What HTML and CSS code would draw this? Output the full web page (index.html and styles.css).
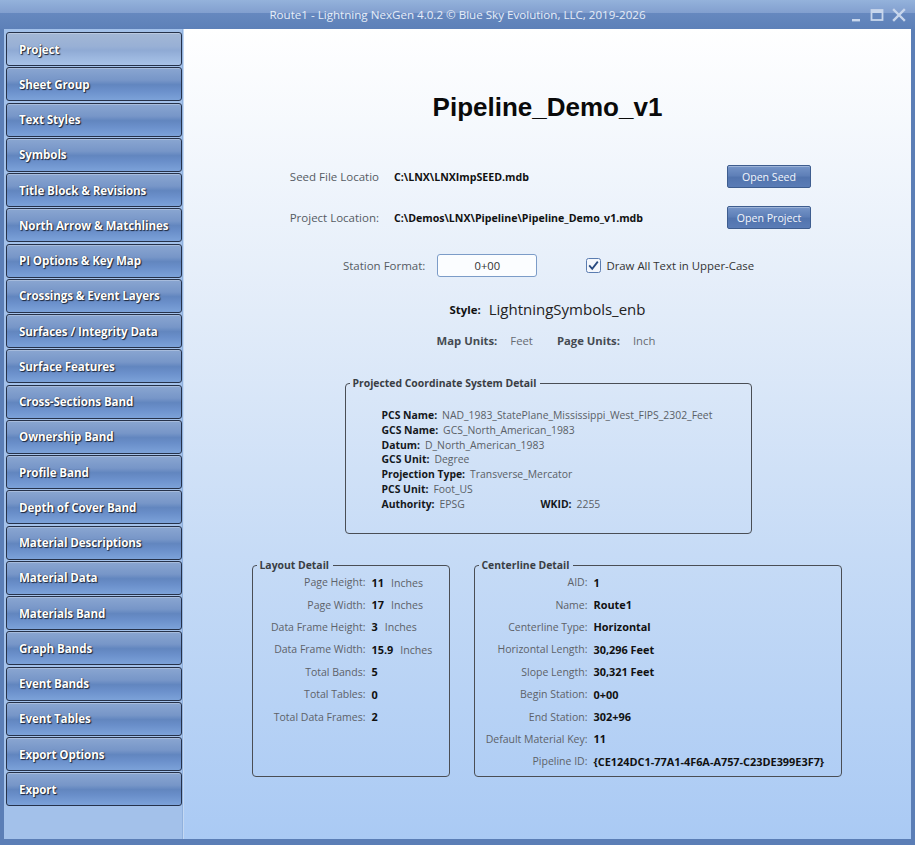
FILE: index.html
```html
<!DOCTYPE html>
<html>
<head>
<meta charset="utf-8">
<title>Route1 - Lightning NexGen</title>
<link rel="stylesheet" href="styles.css">
</head>
<body>
<div class="window">
  <header class="titlebar">
    <span></span>
    <span class="title">Route1 - Lightning NexGen 4.0.2 © Blue Sky Evolution, LLC, 2019-2026</span>
    <div class="controls">
      <svg width="12" height="14" viewBox="0 0 12 14"><rect x="2" y="11" width="8" height="2.4" fill="#c8d6ec"/></svg>
      <svg width="14" height="14" viewBox="0 0 14 14"><rect x="1.5" y="2" width="11" height="10" fill="none" stroke="#c8d6ec" stroke-width="1.8"/><rect x="1.5" y="2" width="11" height="3" fill="#c8d6ec"/></svg>
      <svg width="14" height="14" viewBox="0 0 14 14"><path d="M2 2 L12 12 M12 2 L2 12" stroke="#c8d6ec" stroke-width="2.4" stroke-linecap="square"/></svg>
    </div>
  </header>
  <div class="frame">
    <nav class="sidebar">
      <button class="nav-btn active">Project</button>
      <button class="nav-btn">Sheet Group</button>
      <button class="nav-btn">Text Styles</button>
      <button class="nav-btn">Symbols</button>
      <button class="nav-btn">Title Block &amp; Revisions</button>
      <button class="nav-btn">North Arrow &amp; Matchlines</button>
      <button class="nav-btn">PI Options &amp; Key Map</button>
      <button class="nav-btn">Crossings &amp; Event Layers</button>
      <button class="nav-btn">Surfaces / Integrity Data</button>
      <button class="nav-btn">Surface Features</button>
      <button class="nav-btn">Cross-Sections Band</button>
      <button class="nav-btn">Ownership Band</button>
      <button class="nav-btn">Profile Band</button>
      <button class="nav-btn">Depth of Cover Band</button>
      <button class="nav-btn">Material Descriptions</button>
      <button class="nav-btn">Material Data</button>
      <button class="nav-btn">Materials Band</button>
      <button class="nav-btn">Graph Bands</button>
      <button class="nav-btn">Event Bands</button>
      <button class="nav-btn">Event Tables</button>
      <button class="nav-btn">Export Options</button>
      <button class="nav-btn">Export</button>
    </nav>
    <main class="content">
      <h1 class="project-title">Pipeline_Demo_v1</h1>

      <div class="files">
        <span class="lbl">Seed File Locatio</span>
        <span class="path">C:\LNX\LNXImpSEED.mdb</span>
        <button class="act-btn">Open Seed</button>
        <span class="lbl">Project Location:</span>
        <span class="path">C:\Demos\LNX\Pipeline\Pipeline_Demo_v1.mdb</span>
        <button class="act-btn">Open Project</button>
      </div>

      <div class="station-row">
        <span class="lbl">Station Format:</span>
        <div class="text-input">0+00</div>
        <label class="check">
          <svg width="15" height="15" viewBox="0 0 15 15"><rect x="0.5" y="0.5" width="14" height="14" rx="2" fill="#f4f7fc" stroke="#5a7cb0"/><path d="M3.2 7.4 L6.2 10.8 L11.8 3.6" fill="none" stroke="#27497f" stroke-width="1.8"/></svg>
          <span>Draw All Text in Upper-Case</span>
        </label>
      </div>

      <div class="style-line"><b>Style:</b><span class="style-name">LightningSymbols_enb</span></div>

      <div class="units-line">
        <b>Map Units:</b><span class="unit-val">Feet</span>
        <b class="second">Page Units:</b><span class="unit-val">Inch</span>
      </div>

      <fieldset class="group pcs">
        <legend>Projected Coordinate System Detail</legend>
        <div class="pcs-body">
          <div><b>PCS Name:</b><span>NAD_1983_StatePlane_Mississippi_West_FIPS_2302_Feet</span></div>
          <div><b>GCS Name:</b><span>GCS_North_American_1983</span></div>
          <div><b>Datum:</b><span>D_North_American_1983</span></div>
          <div><b>GCS Unit:</b><span>Degree</span></div>
          <div><b>Projection Type:</b><span>Transverse_Mercator</span></div>
          <div><b>PCS Unit:</b><span>Foot_US</span></div>
          <div class="auth"><span class="auth-cell"><b>Authority:</b><span>EPSG</span></span><b>WKID:</b><span>2255</span></div>
        </div>
      </fieldset>

      <div class="details">
        <fieldset class="group layout">
          <legend>Layout Detail</legend>
          <div class="kv">
            <span class="k">Page Height:</span><span class="v">11<i>Inches</i></span>
            <span class="k">Page Width:</span><span class="v">17<i>Inches</i></span>
            <span class="k">Data Frame Height:</span><span class="v">3<i>Inches</i></span>
            <span class="k">Data Frame Width:</span><span class="v">15.9<i>Inches</i></span>
            <span class="k">Total Bands:</span><span class="v">5</span>
            <span class="k">Total Tables:</span><span class="v">0</span>
            <span class="k">Total Data Frames:</span><span class="v">2</span>
          </div>
        </fieldset>
        <fieldset class="group centerline">
          <legend>Centerline Detail</legend>
          <div class="kv">
            <span class="k">AID:</span><span class="v">1</span>
            <span class="k">Name:</span><span class="v">Route1</span>
            <span class="k">Centerline Type:</span><span class="v">Horizontal</span>
            <span class="k">Horizontal Length:</span><span class="v">30,296 Feet</span>
            <span class="k">Slope Length:</span><span class="v">30,321 Feet</span>
            <span class="k">Begin Station:</span><span class="v">0+00</span>
            <span class="k">End Station:</span><span class="v">302+96</span>
            <span class="k">Default Material Key:</span><span class="v">11</span>
            <span class="k">Pipeline ID:</span><span class="v">{CE124DC1-77A1-4F6A-A757-C23DE399E3F7}</span>
          </div>
        </fieldset>
      </div>
    </main>
  </div>
</div>
</body>
</html>
```
FILE: styles.css
```css
* { box-sizing: border-box; }
html, body { margin: 0; padding: 0; }
body {
  width: 915px;
  height: 845px;
  overflow: hidden;
  font-family: "Open Sans", "Noto Sans", sans-serif;
  background: #5b7eb6;
}
.window {
  display: flex;
  flex-direction: column;
  width: 915px;
  height: 845px;
}
.titlebar {
  height: 29px;
  flex: none;
  display: grid;
  grid-template-columns: 1fr auto 1fr;
  align-items: center;
  background: linear-gradient(to bottom, #94b2db 0%, #829fcf 44%, #6688bf 46%, #5d80b8 100%);
}
.title {
  font-size: 11.6px;
  color: #e6edf8;
  padding-bottom: 1px;
}
.controls {
  justify-self: end;
  display: flex;
  align-items: center;
  gap: 8px;
  padding-right: 9px;
}
.frame {
  flex: 1;
  display: flex;
  padding: 0 4px 6px 4px;
  min-height: 0;
}
.sidebar {
  width: 179px;
  flex: none;
  background: #a3c1ea;
  padding: 3px 1px 0 2px;
  display: flex;
  flex-direction: column;
  gap: 1.25px;
  border-right: 1px solid #90b1de;
}
.nav-btn {
  height: 34px;
  width: 176px;
  flex: none;
  text-align: left;
  padding: 0 0 0 12px;
  font-family: "Open Sans", "Noto Sans", sans-serif;
  font-weight: 700;
  font-size: 11.6px;
  letter-spacing: -0.1px;
  color: #ffffff;
  text-shadow: 1px 1px 1px #1c2538, 0 0 1px #2a3550;
  border: 1px solid #26324a;
  border-radius: 3px;
  background: linear-gradient(to bottom, #8aa6d1 0%, #7796c8 38%, #6286bf 52%, #6a8fca 70%, #7ca2d9 100%);
  box-shadow: inset 0 1px 0 rgba(255,255,255,0.25);
}
.nav-btn.active {
  background: linear-gradient(to bottom, #a3b7d6 0%, #98b0d5 42%, #8faad4 54%, #9bb6de 75%, #a8c2e8 100%);
}
.content {
  flex: 1;
  display: flex;
  flex-direction: column;
  align-items: center;
  background: linear-gradient(to bottom, #ffffff 0%, #e2ecf9 35%, #c6dbf6 65%, #aacaf4 100%);
  border-left: 1px solid #c4d8f2;
  color: #222;
}
.project-title {
  margin: 63px 0 0 0;
  font-family: "Liberation Sans", Arial, sans-serif;
  font-size: 26px;
  line-height: 30px;
  font-weight: 700;
  color: #0a0a0a;
}
.lbl {
  font-size: 11.5px;
  color: #555b63;
}
.files {
  margin-top: 43px;
  width: 627px;
  align-self: flex-start;
  display: grid;
  grid-template-columns: 195px 1fr 84px;
  column-gap: 15px;
  row-gap: 18px;
  align-items: center;
}
.files .lbl { text-align: right; }
.path {
  font-size: 10.6px;
  font-weight: 700;
  color: #111;
}
.act-btn {
  height: 23px;
  width: 84px;
  padding: 0;
  font-family: "Open Sans", "Noto Sans", sans-serif;
  font-size: 10.6px;
  color: #f4f7fc;
  border: 1px solid #3e5d8f;
  border-radius: 2px;
  background: linear-gradient(to bottom, #7695c8 0%, #5f80b8 45%, #5274ae 55%, #5a7cb6 100%);
  box-shadow: inset 0 1px 0 rgba(255,255,255,0.3);
}
.station-row {
  margin-top: 25px;
  display: flex;
  align-items: center;
  padding-left: 2px;
}
.text-input {
  margin-left: 12px;
  width: 100px;
  height: 23px;
  border: 1px solid #7c9cc8;
  border-radius: 3px;
  background: #fbfdff;
  font-size: 11.2px;
  color: #333;
  display: flex;
  align-items: center;
  justify-content: center;
}
.check {
  margin-left: 49px;
  display: flex;
  align-items: center;
  gap: 5px;
  font-size: 11.4px;
  color: #333;
}
.check svg { display: block; }
.style-line {
  margin-top: 21px;
  height: 22px;
  display: flex;
  align-items: center;
  gap: 8px;
}
.style-line b {
  font-size: 11.4px;
  color: #111;
}
.style-name {
  font-size: 15px;
  color: #222;
}
.units-line {
  margin-top: 13px;
  display: flex;
  align-items: center;
  font-size: 11.3px;
  padding-right: 3px;
}
.units-line b { color: #454a52; }
.unit-val { color: #666b72; margin-left: 13px; }
.units-line .second { margin-left: 24px; }

.group {
  margin: 0;
  padding: 0;
  border: 1px solid #4a4e55;
  border-radius: 4px;
}
.group legend {
  margin-left: 4px;
  padding: 0 4px 0 3px;
  font-size: 10.4px;
  font-weight: 700;
  color: #3a3e44;
  line-height: 15px;
}
.pcs {
  margin-top: 28px;
  width: 407px;
  height: 158px;
  margin-left: 1px;
}
.pcs-body {
  padding: 17px 0 0 36px;
  font-size: 10.4px;
  line-height: 14.8px;
  color: #5a5f66;
}
.pcs-body b { color: #15181c; }
.pcs-body b + span { margin-left: 5px; }
.auth-cell { display: inline-block; width: 159px; }

.details {
  margin-top: 24px;
  display: flex;
  gap: 24px;
  margin-left: -2px;
}
.layout { width: 198px; height: 219px; }
.centerline { width: 368px; height: 219px; }
.kv {
  margin-top: -2px;
  display: grid;
  grid-template-columns: 113px auto;
  column-gap: 6px;
  grid-auto-rows: 22.4px;
  align-items: center;
  font-size: 10.5px;
}
.kv .k {
  text-align: right;
  color: #5d6269;
}
.kv .v {
  font-weight: 700;
  font-size: 10.9px;
  color: #111;
}
.kv .v i {
  font-style: normal;
  font-weight: 400;
  font-size: 10.6px;
  color: #5d6269;
  margin-left: 7px;
}
```
